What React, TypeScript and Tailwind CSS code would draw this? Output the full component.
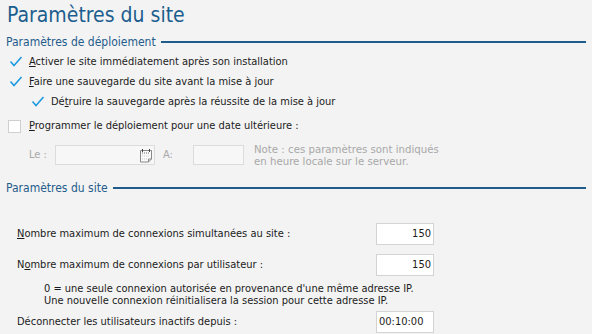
import React from "react";

const Check = () => (
  <svg width="14" height="12" viewBox="0 0 14 12" className="shrink-0">
    <polyline points="1.5,5.5 5,9.5 12.5,1" fill="none" stroke="#1e9ae0" strokeWidth="1.6" />
  </svg>
);

const Section = ({ title, className }: { title: string; className?: string }) => (
  <div className={`flex items-center h-[16px] pl-[6px] pr-[6px] ${className ?? ""}`}>
    <span className="text-[12px] text-[#1f5c8b] whitespace-nowrap">{title}</span>
    <div className="flex-1 h-[2px] bg-[#1f5c8b] ml-[5px]" />
  </div>
);

const Calendar = () => (
  <svg width="14" height="15" viewBox="0 0 14 15">
    <path d="M1.5 2.5 H12.5 V11 L9.5 14 H1.5 Z" fill="#fafafa" stroke="#888" />
    <path d="M9.5 14 V11 H12.5" fill="none" stroke="#888" />
    <line x1="3" y1="5" x2="11" y2="5" stroke="#666" strokeDasharray="1 1" />
    <line x1="3.5" y1="1" x2="3.5" y2="4" stroke="#444" />
    <line x1="10.5" y1="1" x2="10.5" y2="4" stroke="#444" />
    <line x1="3" y1="8" x2="11" y2="8" stroke="#ccc" strokeDasharray="1 1" />
    <line x1="3" y1="11" x2="8" y2="11" stroke="#ccc" strokeDasharray="1 1" />
  </svg>
);

export default function App() {
  return (
    <div
      className="w-[592px] h-[334px] bg-[#f3f3f3] overflow-hidden text-[#1b1b1b] text-[11px]"
      style={{ fontFamily: "'DejaVu Sans Condensed', 'DejaVu Sans', sans-serif" }}
    >
      <div className="h-[34px] pl-[7px] pt-[1px] text-[21px] leading-[28px] text-[#1c5e8e]">
        Paramètres du site
      </div>

      <Section title="Paramètres de déploiement" />

      <div className="flex items-center h-[20px] mt-[2px] pl-[9px] gap-[6px]">
        <Check />
        <span>
          <u>A</u>ctiver le site immédiatement après son installation
        </span>
      </div>
      <div className="flex items-center h-[20px] pl-[9px] gap-[6px]">
        <Check />
        <span>
          <u>F</u>aire une sauvegarde du site avant la mise à jour
        </span>
      </div>
      <div className="flex items-center h-[20px] pl-[31px] gap-[6px]">
        <Check />
        <span>
          Dé<u>t</u>ruire la sauvegarde après la réussite de la mise à jour
        </span>
      </div>
      <div className="flex items-center h-[20px] mt-[4px] pl-[8px] gap-[8px]">
        <div className="w-[13px] h-[13px] bg-white border border-[#cfcfcf]" />
        <span>
          <u>P</u>rogrammer le déploiement pour une date ultérieure :
        </span>
      </div>

      <div className="flex items-start h-[22px] mt-[9px] pl-[29px] text-[#a8a8a8]">
        <span className="w-[26px] leading-[20px]">Le :</span>
        <div className="w-[100px] h-[20px] bg-[#f7f7f7] border border-[#dcdcdc] flex justify-end items-center pr-[1px]">
          <Calendar />
        </div>
        <span className="w-[38px] pl-[8px] leading-[20px]">A:</span>
        <div className="w-[51px] h-[20px] bg-[#f7f7f7] border border-[#dcdcdc]" />
        <div
          className="ml-[10px] text-[10.2px] leading-[12px] mt-[-1px]"
          style={{ fontFamily: "'DejaVu Sans', sans-serif" }}
        >
          <div>Note : ces paramètres sont indiqués</div>
          <div>en heure locale sur le serveur.</div>
        </div>
      </div>

      <Section title="Paramètres du site" className="mt-[13px]" />

      <div className="flex items-center h-[22px] mt-[27px] pl-[17px]">
        <span className="w-[359px]">
          <u>N</u>ombre maximum de connexions simultanées au site :
        </span>
        <div className="w-[58px] h-[22px] bg-white border border-[#d3d3d3] flex items-center justify-end pr-[2px]">
          150
        </div>
      </div>
      <div className="flex items-center h-[22px] mt-[9px] pl-[17px]">
        <span className="w-[359px]">
          N<u>o</u>mbre maximum de connexions par utilisateur :
        </span>
        <div className="w-[58px] h-[22px] bg-white border border-[#d3d3d3] flex items-center justify-end pr-[2px]">
          150
        </div>
      </div>
      <div
        className="pl-[44px] mt-[7px] text-[9.9px] leading-[12px]"
        style={{ fontFamily: "'DejaVu Sans', sans-serif" }}
      >
        <div>0 = une seule connexion autorisée en provenance d'une même adresse IP.</div>
        <div>Une nouvelle connexion réinitialisera la session pour cette adresse IP.</div>
      </div>
      <div className="flex items-center h-[22px] mt-[4px] pl-[17px]">
        <span className="w-[359px]">Déconnecter les utilisateurs inactifs depuis :</span>
        <div className="w-[58px] h-[22px] bg-white border border-[#d3d3d3] flex items-center pl-[2px]">
          00:10:00
        </div>
      </div>
    </div>
  );
}
